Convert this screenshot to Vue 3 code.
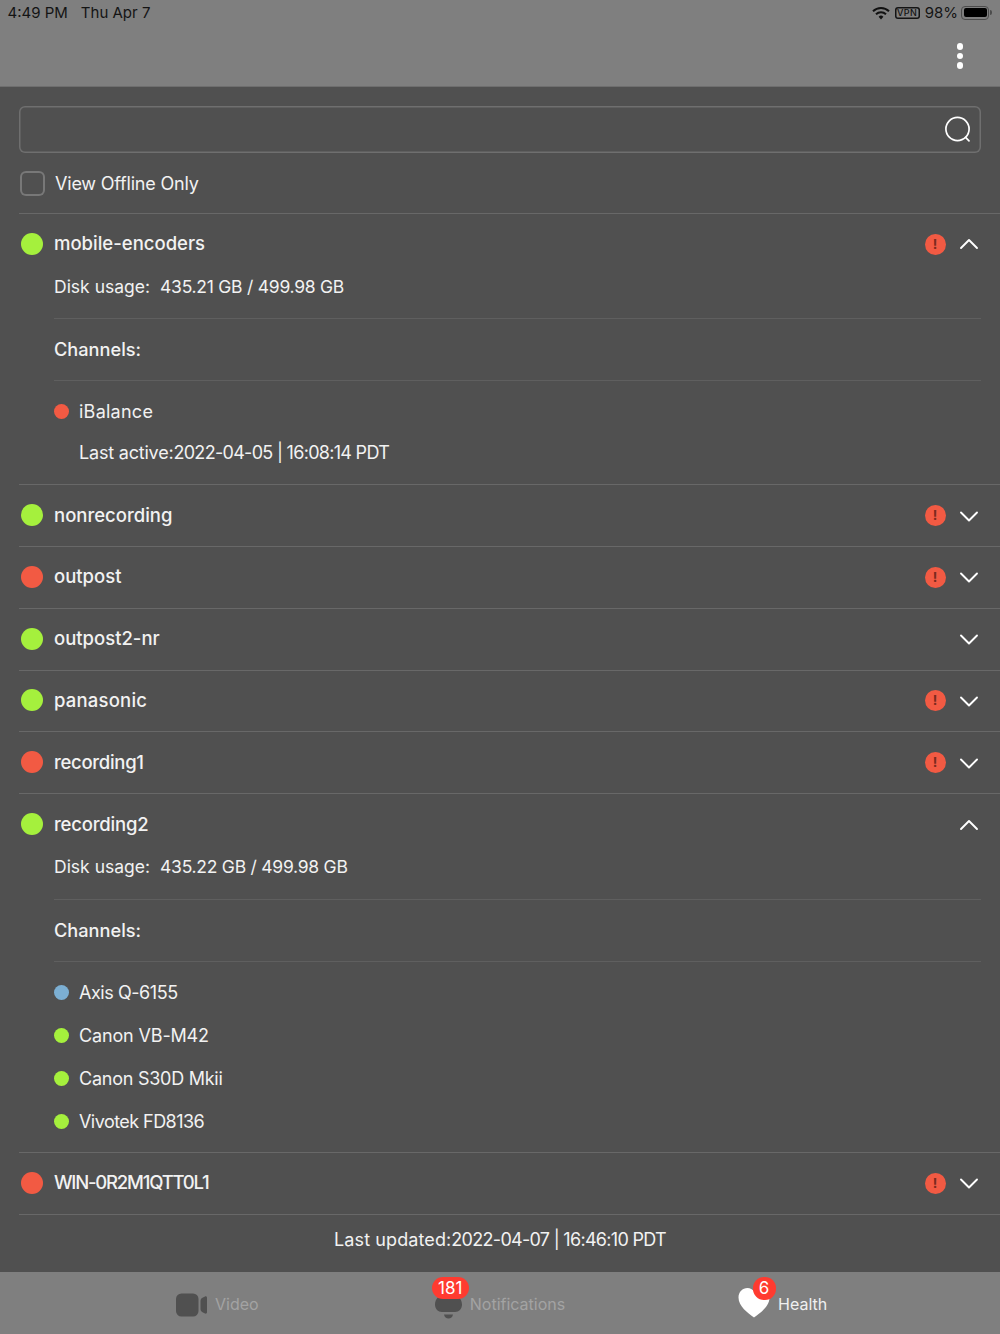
<script setup>
const servers = [
  { name: 'mobile-encoders', status: 'on', alert: true, open: true, disk: '435.21 GB / 499.98 GB',
    channels: [{ name: 'iBalance', status: 'off', track: 0.25, lastLabel: 'Last active:', lastValue: '2022-04-05 | 16:08:14 PDT' }] },
  { name: 'nonrecording', status: 'on', alert: true },
  { name: 'outpost', status: 'off', alert: true },
  { name: 'outpost2-nr', status: 'on', alert: false },
  { name: 'panasonic', status: 'on', alert: true, track: 0.2 },
  { name: 'recording1', status: 'off', alert: true, track: -0.3 },
  { name: 'recording2', status: 'on', alert: false, open: true, loose: true, track: -0.2, disk: '435.22 GB / 499.98 GB',
    channels: [
      { name: 'Axis Q-6155', status: 'idle', track: -0.45 },
      { name: 'Canon VB-M42', status: 'on', track: -0.15 },
      { name: 'Canon S30D Mkii', status: 'on', track: -0.25 },
      { name: 'Vivotek FD8136', status: 'on', track: -0.55 }
    ] },
  { name: 'WIN-0R2M1QTT0L1', status: 'off', alert: true, track: -1.2 }
]
</script>

<template>
  <div class="screen">
    <header class="topbar">
      <div class="status">
        <span class="clock">4:49 PM</span>
        <span class="date">Thu Apr 7</span>
        <span class="spacer"></span>
        <svg class="wifi" width="18" height="14" viewBox="0 0 18 14">
          <path d="M1 5.2a11.5 11.5 0 0 1 16 0" fill="none" stroke="#111" stroke-width="2"/>
          <path d="M4 8.2a7.2 7.2 0 0 1 10 0" fill="none" stroke="#111" stroke-width="2"/>
          <path d="M6.600 10.800a3.400 3.400 0 0 1 4.800 0L9 13.400z" fill="#111"/>
        </svg>
        <span class="vpn">VPN</span>
        <span class="pct">98%</span>
        <span class="battery"><span class="cell"></span></span>
        <span class="nub"></span>
      </div>
      <div class="actions">
        <span class="kebab"><i></i><i></i><i></i></span>
      </div>
    </header>

    <main class="content">
      <div class="search">
        <svg width="28" height="28" viewBox="0 0 28 28">
          <circle cx="13.500" cy="13" r="11.600" fill="none" stroke="#fff" stroke-width="1.700"/>
          <path d="M21.600 21.400l3.400 3.400" stroke="#fff" stroke-width="1.700" stroke-linecap="round"/>
        </svg>
      </div>
      <label class="offline">
        <span class="box"></span>
        <span>View Offline Only</span>
      </label>

      <section v-for="s in servers" :key="s.name" class="server" :class="{ loose: s.loose }">
        <div class="head">
          <span class="dot big" :class="s.status"></span>
          <span class="name" :style="{ letterSpacing: (s.track || 0) + 'px' }">{{ s.name }}</span>
          <span class="alert" v-if="s.alert">!</span>
          <svg class="chev" width="20" height="12" viewBox="0 0 20 12">
            <path :d="s.open ? 'M2 10L10 2l8 8' : 'M2 2.500l8 8 8-8'" fill="none" stroke="#fff" stroke-width="1.900" stroke-linecap="round" stroke-linejoin="round"/>
          </svg>
        </div>
        <div v-if="s.open" class="details">
          <div class="disk">Disk usage:<span class="disk-val">{{ s.disk }}</span></div>
          <div class="chan-title">Channels:</div>
          <div class="chan-list">
            <div v-for="c in s.channels" :key="c.name" class="chan">
              <div class="chan-name">
                <span class="dot small" :class="c.status"></span>
                <span :style="{ letterSpacing: c.track + 'px' }">{{ c.name }}</span>
              </div>
              <div v-if="c.lastLabel" class="last">
                <span class="last-label">{{ c.lastLabel }}</span>
                <span class="stamp">{{ c.lastValue }}</span>
              </div>
            </div>
          </div>
        </div>
      </section>

      <div class="updated">
        <span class="upd-label">Last updated:</span>
        <span class="stamp">2022-04-07 | 16:46:10 PDT</span>
      </div>
    </main>

    <nav class="tabs">
      <div class="tab">
        <span class="ticon">
          <svg width="31" height="24" viewBox="0 0 31 24">
            <rect x="0" y="0.500" width="22.500" height="23" rx="5.500" fill="#505050"/>
            <path d="M24.500 8c0-1.500.7-2.500 2-3.200l2.500-1.300c1-.5 2 .2 2 1.300v14.400c0 1.100-1 1.800-2 1.300l-2.500-1.300c-1.300-.7-2-1.700-2-3.200z" fill="#505050"/>
          </svg>
        </span>
        <span class="tlabel">Video</span>
      </div>
      <div class="tab">
        <span class="ticon">
          <svg width="27" height="28" viewBox="0 0 27 28">
            <path d="M6 2h15c1 3 6 5.500 6 11.500 0 4.500-3 7.500-7 7.500H7c-4 0-7-3-7-7.500C0 7.500 5 5 6 2z" fill="#505050"/>
            <path d="M9 23.500h9c-.5 2.500-2.200 4-4.500 4S9.500 26 9 23.500z" fill="#505050"/>
          </svg>
          <span class="badge wide">181</span>
        </span>
        <span class="tlabel">Notifications</span>
      </div>
      <div class="tab active">
        <span class="ticon">
          <svg width="32" height="31" viewBox="0 1 32 31">
            <path d="M16 30.500C10 26 .5 19.500.5 10.500.5 5 4.500 1 9.500 1c2.800 0 5 1.300 6.500 3.500C17.500 2.300 19.700 1 22.500 1c5 0 9 4 9 9.500 0 9-9.500 15.500-15.500 20z" fill="#fff"/>
          </svg>
          <span class="badge round">6</span>
        </span>
        <span class="tlabel">Health</span>
      </div>
    </nav>
  </div>
</template>

<style scoped>
.screen {
  width: 1000px;
  height: 1334px;
  display: flex;
  flex-direction: column;
  background: #505050;
  color: #f2f2f2;
  font-family: "Inter", "Open Sans", sans-serif;
  overflow: hidden;
}
.topbar {
  height: 86px;
  flex: none;
  background: #7f7f7f;
  border-bottom: 1px solid #6e6e6e;
  box-sizing: content-box;
}
.status {
  height: 25px;
  display: flex;
  align-items: center;
  padding: 0 8px 0 7.500px;
  color: #141414;
  font-size: 15px;
}
.date { margin-left: 13px; }
.spacer { flex: 1; }
.wifi { margin-right: 5px; }
.vpn {
  width: 25px;
  height: 12px;
  box-sizing: border-box;
  box-shadow: inset 0 0 0 1.500px #141414;
  border-radius: 3px;
  font-size: 9px;
  line-height: 12px;
  text-align: center;
  letter-spacing: .4px;
  font-weight: 500;
  margin-right: 5px;
}
.battery {
  width: 28px;
  height: 14px;
  box-sizing: border-box;
  border: 1px solid #4c4c4c;
  border-radius: 4px;
  padding: 1.500px;
  margin-left: 3px;
  display: flex;
}
.cell { flex: 1; background: #000; border-radius: 2px; }
.nub { width: 2px; height: 5px; background: #4c4c4c; border-radius: 0 2px 2px 0; margin-left: 1px; }
.actions {
  height: 61px;
  display: flex;
  align-items: flex-start;
  justify-content: flex-end;
  padding: 18px 37px 0 0;
  box-sizing: border-box;
}
.kebab { display: flex; flex-direction: column; gap: 3px; }
.kebab i { width: 6.500px; height: 6.500px; border-radius: 50%; background: #fff; display: block; }

.content { flex: 1; padding: 19px 0 0 19px; display: flex; flex-direction: column; min-height: 0; }
.search {
  width: 962px;
  height: 47px;
  box-sizing: border-box;
  box-shadow: inset 0 0 0 1.500px #6f6f6f;
  border-radius: 6px;
  display: flex;
  align-items: center;
  justify-content: flex-end;
  padding-right: 9px;
  flex: none;
}
.offline {
  display: flex;
  align-items: center;
  gap: 10px;
  height: 60px;
  font-size: 18px;
  letter-spacing: -.2px;
  padding-left: 1px;
  flex: none;
}
.box {
  width: 25px;
  height: 25px;
  box-shadow: inset 0 0 0 2px #787878;
  border-radius: 6px;
}
.server { border-top: 1px solid #686868; flex: none; }
.head {
  height: 60.800px;
  display: flex;
  align-items: center;
  padding-right: 21px;
}
.dot { border-radius: 50%; display: block; flex: none; }
.dot.big { width: 22px; height: 22px; margin: 0 11px 1px 2px; }
.dot.small { width: 15px; height: 15px; margin-right: 10px; }
.dot.on { background: #a5f03d; }
.dot.off { background: #f25a43; }
.dot.idle { background: #7cafd3; }
.name { flex: 1; font-size: 18.500px; font-weight: 500; padding-bottom: 2px; }
.alert {
  width: 21px;
  height: 21px;
  border-radius: 50%;
  background: #f25a43;
  color: #7a2a1e;
  font-size: 13.500px;
  font-weight: 700;
  line-height: 21px;
  text-align: center;
  margin-right: 13.500px;
}
.details { margin-left: 35px; margin-right: 19px; }
.disk {
  height: 24px;
  line-height: 24px;
  padding-bottom: 19.400px;
  font-size: 17.500px;
  box-sizing: content-box;
  border-bottom: 1px solid #5f5f5f;
}
.server.loose .disk { margin-top: .5px; }
.disk-val { margin-left: 10px; letter-spacing: -.25px; }
.chan-title {
  height: 61px;
  line-height: 60px;
  font-size: 18.200px;
  font-weight: 500;
  border-bottom: 1px solid #5f5f5f;
}
.chan-list { padding: 8.600px 0 8.400px; }
.chan-name {
  height: 43.300px;
  display: flex;
  align-items: center;
  font-size: 18px;
}
.last {
  height: 40.600px;
  line-height: 40.600px;
  padding-left: 25px;
  font-size: 18px;
  margin-bottom: 2.100px;
}
.last-label { letter-spacing: -.2px; }
.stamp { letter-spacing: -.7px; }
.updated {
  border-top: 1px solid #686868;
  height: 50px;
  line-height: 50px;
  text-align: center;
  padding-right: 19px;
  font-size: 18px;
}
.upd-label { letter-spacing: .1px; }
.tabs {
  height: 62px;
  flex: none;
  background: #7f7f7f;
  display: grid;
  grid-template-columns: repeat(3, 1fr);
  padding: 0 76px;
  box-sizing: border-box;
}
.tab {
  display: flex;
  align-items: center;
  justify-content: center;
  gap: 8px;
  padding-top: 3px;
  font-size: 16px;
  color: #a3a3a3;
}
.tab.active { color: #f0f0f0; }
.tab.active .ticon { margin-top: -2px; }
.tlabel { padding-bottom: 2px; }
.ticon { position: relative; display: block; line-height: 0; }
.badge {
  position: absolute;
  background: #ff3b30;
  color: #fff;
  font-size: 17px;
  line-height: 22px;
  height: 22px;
  text-align: center;
  border-radius: 11px;
}
.badge.wide { width: 37px; left: -3px; top: -14px; }
.badge.round { width: 23px; left: 14.500px; top: -11px; height: 23px; line-height: 23px; }
</style>
